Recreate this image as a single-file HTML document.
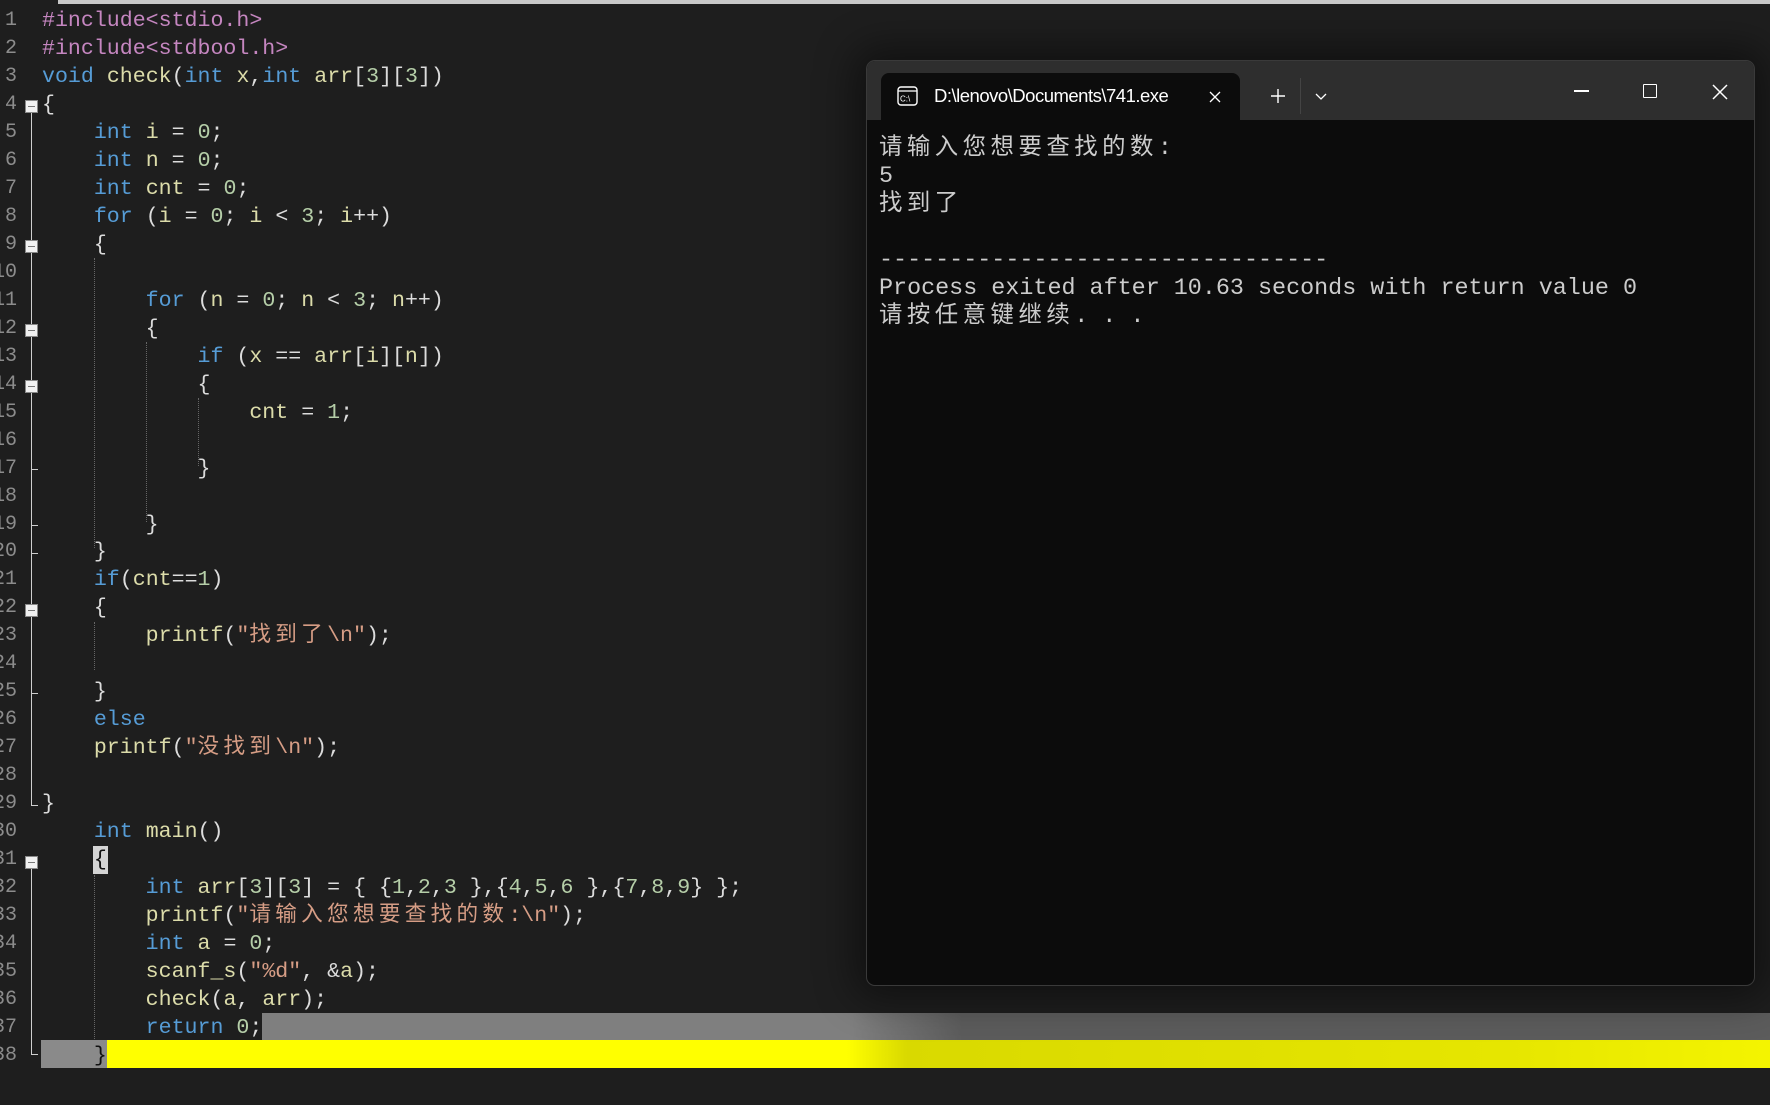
<!DOCTYPE html>
<html><head><meta charset="utf-8"><style>
body{margin:0;width:1770px;height:1105px;background:#1e1e1e;overflow:hidden;position:relative;font-family:"Liberation Mono","Noto Sans CJK SC",monospace;}
.top{position:absolute;left:58px;top:0;width:1712px;height:4px;background:#c8c8c8}
.ln{position:absolute;left:-30px;width:47px;text-align:right;color:#8c8c8c;font-size:20px;height:28px;line-height:28px;white-space:pre}
.cl{position:absolute;left:42px;font-size:21.6px;height:28px;line-height:28px;white-space:pre;color:#dcdcdc}
.k{color:#569cd6}.p{color:#c586c0}.f{color:#dcdcaa}.n{color:#b5cea8}.s{color:#d69d85}.v{color:#dcdcaa}
.c{letter-spacing:4.3px}
.fold{position:absolute;left:25px;width:11px;height:11px;background:#f0f0f0;border:1px solid #888}
.fold:after{content:"";position:absolute;left:2px;top:5px;width:7px;height:1px;background:#777}
.vl{position:absolute;left:31px;width:1px;background:#cfcfcf}
.tk{position:absolute;left:31px;width:7px;height:1px;background:#cfcfcf}
.ig{position:absolute;width:0;border-left:1px dotted #666}
.term{position:absolute;left:866px;top:60px;width:887px;height:924px;background:#0c0c0c;border:1px solid #3a3a3a;border-radius:9px;box-shadow:0 0 40px 12px rgba(0,0,0,.45);overflow:hidden}
.bar{position:absolute;left:0;top:0;width:100%;height:59px;background:#2e2e2e}
.tab{position:absolute;left:14px;top:12px;width:359px;height:47px;background:#0c0c0c;border-radius:8px 8px 0 0}
.tt{position:absolute;left:53px;top:12px;font-family:"Liberation Sans",sans-serif;font-size:18.5px;color:#fff;width:248px;overflow:hidden;white-space:nowrap;letter-spacing:-0.5px}
.tl{position:absolute;left:12px;font-size:23.4px;color:#cccccc;white-space:pre;line-height:28px;height:28px}
.tl .c{letter-spacing:4.5px}
</style></head><body>
<div class="top"></div>

<div class="vl" style="top:112px;height:693px"></div>
<div class="tk" style="top:805px"></div>
<div class="vl" style="top:864px;height:190px"></div>
<div class="tk" style="top:1054px"></div>
<div class="fold" style="top:100px"></div>
<div class="fold" style="top:240px"></div>
<div class="fold" style="top:324px"></div>
<div class="fold" style="top:380px"></div>
<div class="fold" style="top:604px"></div>
<div class="fold" style="top:856px"></div>
<div class="tk" style="top:469px"></div>
<div class="tk" style="top:525px"></div>
<div class="tk" style="top:553px"></div>
<div class="tk" style="top:693px"></div>
<div class="ig" style="left:94px;top:258px;height:290px"></div>
<div class="ig" style="left:94px;top:622px;height:48px"></div>
<div class="ig" style="left:146px;top:342px;height:180px"></div>
<div class="ig" style="left:198px;top:398px;height:68px"></div>
<div class="ig" style="left:94px;top:875px;height:170px"></div>

<div style="position:absolute;left:262px;top:1013px;width:1508px;height:27px;background:linear-gradient(90deg,#7f7f7f 0,#7f7f7f 590px,#5c5c5c 700px,#5c5c5c)"></div>
<div style="position:absolute;left:41px;top:1040px;width:66px;height:28px;background:#8a8a8a"></div>
<div style="position:absolute;left:107px;top:1040px;width:1663px;height:28px;background:linear-gradient(90deg,#ffff00 0,#ffff00 740px,#d9d900 800px,#e6e600 1400px,#f4f400)"></div>
<div style="position:absolute;left:93px;top:846px;width:15px;height:28px;background:#d4d4d4"></div>

<div id="code"></div>
<script>
var L=[
'<span class="p">#include&lt;stdio.h&gt;</span>',
'<span class="p">#include&lt;stdbool.h&gt;</span>',
'<span class="k">void</span> <span class="f">check</span>(<span class="k">int</span> <span class="v">x</span>,<span class="k">int</span> <span class="v">arr</span>[<span class="n">3</span>][<span class="n">3</span>])',
'{',
'    <span class="k">int</span> <span class="v">i</span> = <span class="n">0</span>;',
'    <span class="k">int</span> <span class="v">n</span> = <span class="n">0</span>;',
'    <span class="k">int</span> <span class="v">cnt</span> = <span class="n">0</span>;',
'    <span class="k">for</span> (<span class="v">i</span> = <span class="n">0</span>; <span class="v">i</span> &lt; <span class="n">3</span>; <span class="v">i</span>++)',
'    {',
'',
'        <span class="k">for</span> (<span class="v">n</span> = <span class="n">0</span>; <span class="v">n</span> &lt; <span class="n">3</span>; <span class="v">n</span>++)',
'        {',
'            <span class="k">if</span> (<span class="v">x</span> == <span class="v">arr</span>[<span class="v">i</span>][<span class="v">n</span>])',
'            {',
'                <span class="v">cnt</span> = <span class="n">1</span>;',
'',
'            }',
'',
'        }',
'    }',
'    <span class="k">if</span>(<span class="v">cnt</span>==<span class="n">1</span>)',
'    {',
'        <span class="f">printf</span>(<span class="s">"<span class="c">找到了</span>\\n"</span>);',
'',
'    }',
'    <span class="k">else</span>',
'    <span class="f">printf</span>(<span class="s">"<span class="c">没找到</span>\\n"</span>);',
'',
'}',
'    <span class="k">int</span> <span class="f">main</span>()',
'    <span style="color:#111">{</span>',
'        <span class="k">int</span> <span class="v">arr</span>[<span class="n">3</span>][<span class="n">3</span>] = { {<span class="n">1</span>,<span class="n">2</span>,<span class="n">3</span> },{<span class="n">4</span>,<span class="n">5</span>,<span class="n">6</span> },{<span class="n">7</span>,<span class="n">8</span>,<span class="n">9</span>} };',
'        <span class="f">printf</span>(<span class="s">"<span class="c">请输入您想要查找的数</span>:\\n"</span>);',
'        <span class="k">int</span> <span class="v">a</span> = <span class="n">0</span>;',
'        <span class="f">scanf_s</span>(<span class="s">"%d"</span>, &amp;<span class="v">a</span>);',
'        <span class="f">check</span>(<span class="v">a</span>, <span class="v">arr</span>);',
'        <span class="k">return</span> <span class="n">0</span>;',
'    <span style="color:#111">}</span>'];
var h='';for(var i=0;i<L.length;i++){var t=(7+i*27.97).toFixed(1);h+='<div class="ln" style="top:'+t+'px">'+(i+1)+'</div><div class="cl" style="top:'+t+'px">'+L[i]+'</div>';}
document.getElementById('code').innerHTML=h;
</script>

<div class="term">
 <div class="bar"></div>
 <div class="tab">
  <svg style="position:absolute;left:16px;top:13px" width="21" height="20" viewBox="0 0 21 20"><rect x="1" y="1" width="19" height="18" rx="3" fill="none" stroke="#fff" stroke-width="1.4"/><line x1="1" y1="5" x2="20" y2="5" stroke="#fff" stroke-width="1.2"/><text x="3" y="15.5" font-size="8" fill="#fff" font-family="Liberation Sans">C:\</text></svg>
  <div class="tt">D:\lenovo\Documents\741.exe</div>
  <svg style="position:absolute;left:328px;top:18px" width="12" height="12" viewBox="0 0 12 12"><path d="M1 1L11 11M11 1L1 11" stroke="#fff" stroke-width="1.3"/></svg>
 </div>
 <svg style="position:absolute;left:403px;top:27px" width="16" height="16" viewBox="0 0 16 16"><path d="M8 1V15M1 8H15" stroke="#fff" stroke-width="1.4"/></svg>
 <div style="position:absolute;left:433px;top:17px;width:1px;height:36px;background:#444"></div>
 <svg style="position:absolute;left:448px;top:32px" width="12" height="8" viewBox="0 0 12 8"><path d="M1 1L6 6L11 1" stroke="#fff" stroke-width="1.3" fill="none"/></svg>
 <div style="position:absolute;left:707px;top:29px;width:15px;height:1.5px;background:#fff"></div>
 <div style="position:absolute;left:776px;top:23px;width:12px;height:12px;border:1.5px solid #fff;border-radius:1px"></div>
 <svg style="position:absolute;left:845px;top:23px" width="16" height="16" viewBox="0 0 16 16"><path d="M1 1L15 15M15 1L1 15" stroke="#fff" stroke-width="1.5"/></svg>
 <div class="tl" style="top:74px"><span class="c">请输入您想要查找的数</span>:</div>
 <div class="tl" style="top:102px">5</div>
 <div class="tl" style="top:130px"><span class="c">找到了</span></div>
 <div class="tl" style="top:186px">--------------------------------</div>
 <div class="tl" style="top:214px">Process exited after 10.63 seconds with return value 0</div>
 <div class="tl" style="top:242px"><span class="c">请按任意键继续</span>. . .</div>
</div>
</body></html>
